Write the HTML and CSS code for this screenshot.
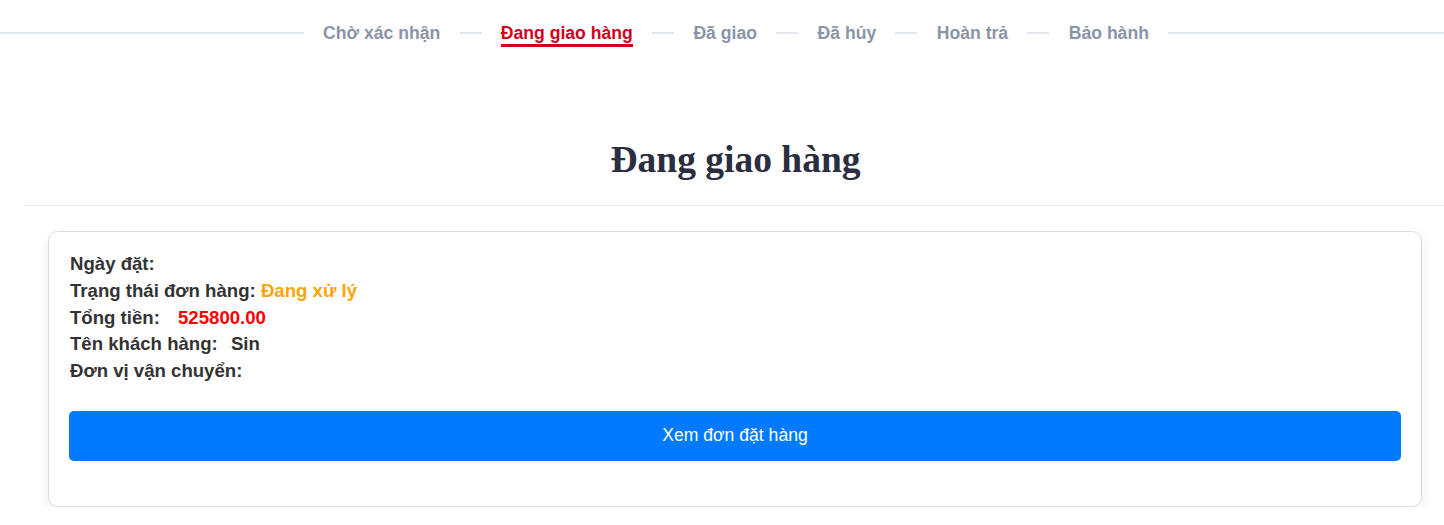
FILE: index.html
```html
<!DOCTYPE html>
<html lang="vi">
<head>
<meta charset="utf-8">
<title>Đang giao hàng</title>
<link rel="stylesheet" href="styles.css">
</head>
<body>
<nav class="tabs">
  <span class="line line-edge line-left"></span>
  <a class="tab">Chờ xác nhận</a>
  <span class="line"></span>
  <a class="tab active">Đang giao hàng</a>
  <span class="line"></span>
  <a class="tab">Đã giao</a>
  <span class="line"></span>
  <a class="tab">Đã hủy</a>
  <span class="line"></span>
  <a class="tab">Hoàn trả</a>
  <span class="line"></span>
  <a class="tab">Bảo hành</a>
  <span class="line line-edge line-right"></span>
</nav>
<main class="content">
  <h1 class="title">Đang giao hàng</h1>
  <div class="card">
    <div class="info">
      <div class="row">Ngày đặt:</div>
      <div class="row">Trạng thái đơn hàng: <span class="status">Đang xử lý</span></div>
      <div class="row">Tổng tiền: <span class="price">525800.00</span></div>
      <div class="row">Tên khách hàng: <span class="name">Sin</span></div>
      <div class="row">Đơn vị vận chuyển:</div>
    </div>
    <button class="btn">Xem đơn đặt hàng</button>
  </div>
</main>
</body>
</html>
```
FILE: styles.css
```css
* { box-sizing: border-box; }
body {
  margin: 0;
  font-family: "Liberation Sans", Arial, sans-serif;
  background: #fff;
}
.tabs {
  display: flex;
  align-items: center;
  height: 66px;
}
.line {
  width: 22px;
  height: 2px;
  background: #e2e6ee;
  margin: 0 19.3px;
}
.line-edge { margin: 0; }
.line-left { flex: 1 0 28px; margin-right: 19px; }
.line-right { flex: 1 0 0; margin-left: 19px; }
.tab {
  font-size: 17.6px;
  line-height: 20px;
  font-weight: bold;
  color: #8a94a9;
  margin-top: 2px;
  padding: 2px 0 1px;
  border-bottom: 3px solid transparent;
}
.tab.active {
  color: #d0021b;
  border-bottom-color: #d0021b;
}
.content {
  margin-left: 24px;
  margin-right: -3px;
}
.title {
  font-family: "Liberation Serif", "Times New Roman", serif;
  font-weight: bold;
  font-size: 37.5px;
  color: #2b2e3f;
  text-align: center;
  margin: 0;
  padding: 72px 0 23px;
  line-height: 44px;
  border-bottom: 1px solid #ebebeb;
}
.card {
  margin: 25px 25px 0 24px;
  border: 1px solid #dcdcdc;
  border-radius: 10px;
  box-shadow: 0 4px 12px rgba(0,0,0,0.08);
  padding: 19px 20px 45px;
}
.info {
  font-size: 18.6px;
  font-weight: bold;
  color: #333;
  line-height: 26.8px;
  padding-left: 1px;
}
.status { color: #ffa500; }
.price { color: #ff0000; margin-left: 13px; }
.name { margin-left: 8px; }
.btn {
  display: block;
  width: 100%;
  margin-top: 26px;
  height: 50px;
  border: none;
  border-radius: 5px;
  background: #007bff;
  color: #fff;
  font-family: "Liberation Sans", Arial, sans-serif;
  font-size: 17.6px;
}
```
